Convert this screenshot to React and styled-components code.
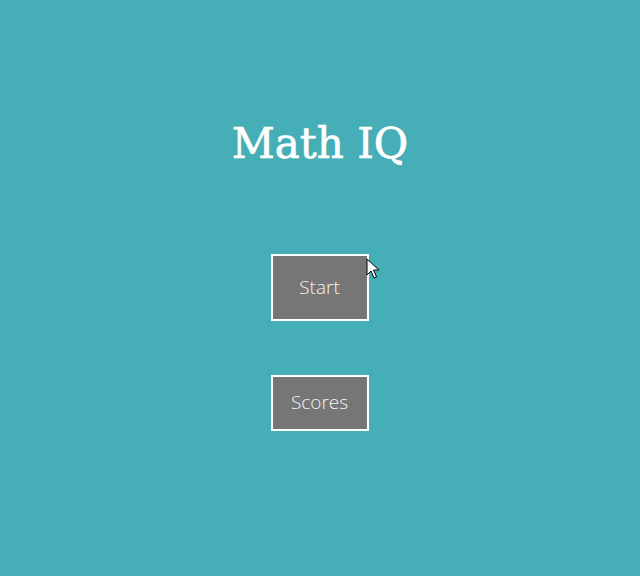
import React from 'react';
import styled, { createGlobalStyle } from 'styled-components';

const GlobalStyle = createGlobalStyle`
  html, body {
    margin: 0;
    padding: 0;
    background: #45aeb7;
  }
`;

const Page = styled.div`
  position: relative;
  width: 640px;
  height: 576px;
  background: #45aeb7;
  display: flex;
  flex-direction: column;
  align-items: center;
  overflow: hidden;
`;

const Title = styled.h1`
  margin: 116px 0 0;
  font-family: 'DejaVu Serif', 'Liberation Serif', serif;
  font-weight: normal;
  font-size: 42px;
  line-height: 56px;
  color: #ffffff;
  -webkit-text-stroke: 0.7px #ffffff;
`;

const Menu = styled.div`
  margin-top: 82px;
  margin-right: 1px;
  display: flex;
  flex-direction: column;
  align-items: center;
  gap: 54px;
`;

const MenuButton = styled.button`
  width: 98px;
  height: ${p => (p.$tall ? '67px' : '56px')};
  box-sizing: border-box;
  border: 2px solid #ffffff;
  background-color: #777777;
  background-image: repeating-conic-gradient(#7a7a7a 0 25%, #727272 0 50%);
  background-size: 2px 2px;
  color: #f4f4f4;
  font-family: 'Open Sans', sans-serif;
  font-weight: 300;
  font-size: 19px;
  padding: 0 0 2px;
  cursor: pointer;
`;

const Cursor = styled.svg`
  position: absolute;
  left: 366px;
  top: 258px;
`;

export default function App() {
  return (
    <Page>
      <GlobalStyle />
      <Title>Math IQ</Title>
      <Menu>
        <MenuButton $tall>Start</MenuButton>
        <MenuButton>Scores</MenuButton>
      </Menu>
      <Cursor width="16" height="22" viewBox="0 0 16 22">
        <path d="M1 1 L1 17 L5 13 L8 20 L10.5 19 L7.5 12 L13 12 Z" fill="#ffffff" stroke="#000000" strokeWidth="1" strokeLinejoin="round" />
      </Cursor>
    </Page>
  );
}
